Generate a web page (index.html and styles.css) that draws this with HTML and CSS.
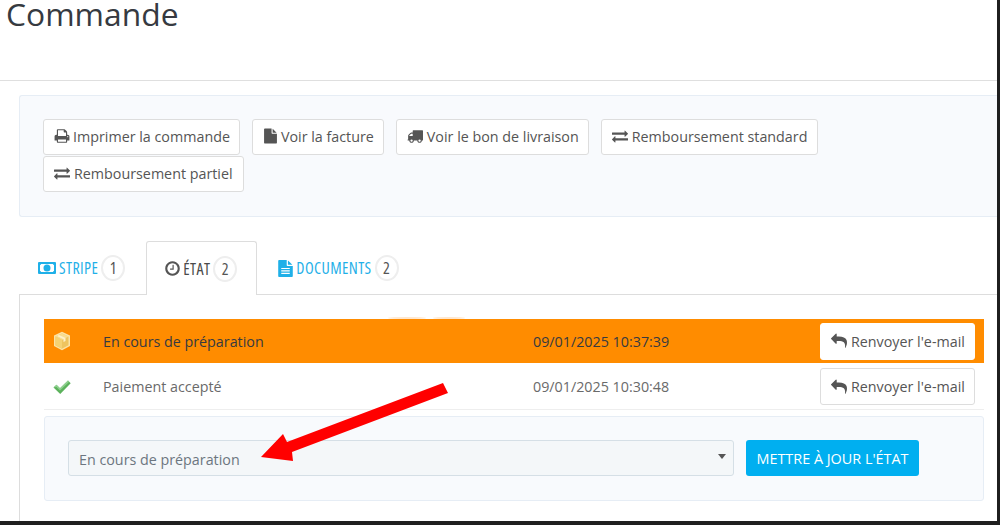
FILE: index.html
```html
<!DOCTYPE html>
<html lang="fr">
<head>
<meta charset="utf-8">
<title>Commande</title>
<link rel="stylesheet" href="styles.css">
</head>
<body>
<svg class="sprite" xmlns="http://www.w3.org/2000/svg">
  <symbol id="i-print" viewBox="0 0 1792 1792"><path d="M448 1536h896v-256h-896v256zm0-640h896v-384h-160q-40 0-68-28t-28-68v-160h-640v640zm1152 64q0-26-19-45t-45-19-45 19-19 45 19 45 45 19 45-19 19-45zm128 0v416q0 13-9.5 22.5t-22.5 9.5h-224v160q0 40-28 68t-68 28h-960q-40 0-68-28t-28-68v-160h-224q-13 0-22.5-9.5t-9.5-22.5v-416q0-79 56.5-135.5t135.5-56.5h64v-544q0-40 28-68t68-28h672q40 0 88 20t76 48l152 152q28 28 48 76t20 88v256h64q79 0 135.5 56.5t56.5 135.5z"/></symbol>
  <symbol id="i-file" viewBox="0 0 1792 1792"><path d="M1152 512v-472q22 14 36 28l408 408q14 14 28 36h-472zm-128 32q0 40 28 68t68 28h544v1056q0 40-28 68t-68 28h-1344q-40 0-68-28t-28-68v-1600q0-40 28-68t68-28h800v544z"/></symbol>
  <symbol id="i-truck" viewBox="0 0 1792 1792"><path d="M640 1408q0-52-38-90t-90-38-90 38-38 90 38 90 90 38 90-38 38-90zm-384-512h384v-256h-158q-13 0-22 9l-195 195q-9 9-9 22v30zm1280 512q0-52-38-90t-90-38-90 38-38 90 38 90 90 38 90-38 38-90zm256-1088v1024q0 15-4 26.5t-13.5 18.5-16.5 11.5-23.5 6-22.5 2-25.5 0-22.5-.5q0 106-75 181t-181 75-181-75-75-181h-384q0 106-75 181t-181 75-181-75-75-181h-64q-3 0-22.5.5t-25.5 0-22.5-2-23.5-6-16.5-11.5-13.5-18.5-4-26.5q0-26 19-45t45-19v-320q0-8-.5-35t0-38 2.5-34.5 6.5-37 14-30.5 22.5-30l198-198q19-19 50.5-32t58.5-13h160v-192q0-26 19-45t45-19h1024q26 0 45 19t19 45z"/></symbol>
  <symbol id="i-exchange" viewBox="0 0 1792 1792"><path d="M1792 1184v192q0 13-9.5 22.5t-22.5 9.5h-1376v192q0 13-9.5 22.5t-22.5 9.5q-12 0-24-10l-319-320q-9-9-9-22 0-14 9-23l320-320q9-9 23-9 13 0 22.5 9.5t9.5 22.5v192h1376q13 0 22.5 9.5t9.5 22.5zm0-544q0 14-9 23l-320 320q-9 9-23 9-13 0-22.5-9.5t-9.5-22.5v-192h-1376q-13 0-22.5-9.5t-9.5-22.5v-192q0-13 9.5-22.5t22.5-9.5h1376v-192q0-14 9-23t23-9q12 0 24 10l319 319q9 9 9 23z"/></symbol>
  <symbol id="i-clock" viewBox="0 0 1792 1792"><path d="M1024 544v448q0 14-9 23t-23 9h-320q-14 0-23-9t-9-23v-64q0-14 9-23t23-9h224v-352q0-14 9-23t23-9h64q14 0 23 9t9 23zm416 352q0-148-73-273t-198-198-273-73-273 73-198 198-73 273 73 273 198 198 273 73 273-73 198-198 73-273zm224 0q0 209-103 385.5t-279.5 279.5-385.5 103-385.5-103-279.5-279.5-103-385.5 103-385.5 279.5-279.5 385.5-103 385.5 103 279.5 279.5 103 385.5z"/></symbol>
  <symbol id="i-reply" viewBox="0 0 1792 1792"><path d="M1792 1120q0 166-127 451-3 7-10.5 24t-13.5 30-13 22q-12 17-28 17-15 0-23.5-10t-8.5-25q0-9 2.5-26.5t2.5-23.5q5-68 5-123 0-101-17.5-181t-48.5-138.5-80-101-105.5-69.5-133-42.5-154-21.5-175.5-6h-224v256q0 26-19 45t-45 19-45-19l-512-512q-19-19-19-45t19-45l512-512q19-19 45-19t45 19 19 45v256h224q713 0 875 403 53 134 53 333z"/></symbol>
  <symbol id="i-money" viewBox="0 0 18 12"><path fill-rule="evenodd" d="M1 0h16a1 1 0 0 1 1 1v10a1 1 0 0 1-1 1H1a1 1 0 0 1-1-1V1a1 1 0 0 1 1-1zm2 2a1 1 0 0 1-1 1v6a1 1 0 0 1 1 1h12a1 1 0 0 1 1-1V3a1 1 0 0 1-1-1H3zm6 .5a3.5 3.5 0 1 1 0 7 3.5 3.5 0 0 1 0-7z"/><path d="M8.2 4.2h1.3v3.2h1v.8H7.5v-.8h1v-2l-.6.4-.4-.6z" fill-rule="evenodd"/></symbol>
  <symbol id="i-doc" viewBox="0 0 1792 1792"><path fill-rule="evenodd" d="M1152 512v-472q22 14 36 28l408 408q14 14 28 36h-472zm-128 32q0 40 28 68t68 28h544v1056q0 40-28 68t-68 28h-1344q-40 0-68-28t-28-68v-1600q0-40 28-68t68-28h800v544zM448 832v128h896V832H448zm0 256v128h896v-128H448zm0 256v128h896v-128H448z"/></symbol>
</svg>

<div class="page">
  <header class="head">
    <h1 class="title">Commande</h1>
  </header>

  <main class="content">
    <section class="toolbar">
      <a class="btn btn-tight"><svg class="ico"><use href="#i-print"/></svg>Imprimer la commande</a>
      <a class="btn btn-tight"><svg class="ico ico-file"><use href="#i-file"/></svg>Voir la facture</a>
      <a class="btn btn-tight"><svg class="ico ico-roomy"><use href="#i-truck"/></svg>Voir le bon de livraison</a>
      <a class="btn"><svg class="ico ico-roomy"><use href="#i-exchange"/></svg>Remboursement standard</a>
      <a class="btn"><svg class="ico ico-roomy"><use href="#i-exchange"/></svg>Remboursement partiel</a>
    </section>

    <nav class="tabs">
      <a class="tab link first"><svg class="tab-ico wide"><use href="#i-money"/></svg><span class="tab-label">STRIPE</span><span class="badge">1</span></a>
      <a class="tab active"><svg class="tab-ico"><use href="#i-clock"/></svg><span class="tab-label">ÉTAT</span><span class="badge">2</span></a>
      <a class="tab link"><svg class="tab-ico"><use href="#i-doc"/></svg><span class="tab-label">DOCUMENTS</span><span class="badge">2</span></a>
    </nav>

    <section class="tab-body">
      <div class="history">
        <div class="row current">
          <i class="smudge smudge-a"></i><i class="smudge smudge-b"></i>
          <span class="state-ico">
            <svg width="20" height="20" viewBox="0 0 20 20"><path d="M10 .8l8 3.700v10.600l-8 4.100-8-4.100V4.500z" fill="#fbe3a6"/><path d="M10 2.500l6.500 3v8.800L10 17.800l-6.500-3.500V5.500z" fill="#eec45f"/><path d="M10 2.500l6.500 3L10 9 3.500 5.500z" fill="#f8dc8f"/><path d="M10 9v8.800l-6.500-3.500V5.500z" fill="#f5d273"/><path d="M7 3.900l6.500 3.200v3l-2 1V8.300L5.200 5z" fill="#fff0c8"/></svg>
          </span>
          <span class="state-name">En cours de préparation</span>
          <span class="state-date">09/01/2025 10:37:39</span>
          <a class="btn resend"><svg class="ico"><use href="#i-reply"/></svg>Renvoyer l'e-mail</a>
        </div>
        <div class="row">
          <span class="state-ico">
            <svg width="20" height="16" viewBox="0 0 20 16"><path d="M1.500 8.500l3-2.700 3.500 3.400L16 1.500l2.700 2.700L8.200 15z" fill="#5cb25c"/><path d="M1.500 8.500l3-2.700 3.500 3.400L16 1.500l1.200 1.200L8 11.500 4.500 8z" fill="#8fd08f"/></svg>
          </span>
          <span class="state-name">Paiement accepté</span>
          <span class="state-date">09/01/2025 10:30:48</span>
          <a class="btn resend"><svg class="ico"><use href="#i-reply"/></svg>Renvoyer l'e-mail</a>
        </div>
      </div>

      <form class="state-form">
        <div class="select"><span>En cours de préparation</span><i class="caret"></i></div>
        <button class="submit" type="button">METTRE À JOUR L'ÉTAT</button>
      </form>
    </section>
  </main>

  <svg class="arrow" width="200" height="90" viewBox="0 0 200 90" xmlns="http://www.w3.org/2000/svg">
    <polygon points="182,2 187,12 31,71 32,80 0,76 22,53 26,61" fill="#ff0000"/>
  </svg>
</div>
</body>
</html>
```
FILE: styles.css
```css
* { box-sizing: border-box; }
html, body { margin: 0; height: 100%; }
body {
  background: #1f1f1f;
  font-family: "Open Sans", "Noto Sans", sans-serif;
  font-size: 14.3px;
  color: #555;
  overflow: hidden;
}
.sprite { display: none; }

.page {
  position: relative;
  width: 997px;
  height: 521px;
  background: #fff;
  overflow: hidden;
}

.head {
  height: 81px;
  border-bottom: 1px solid #dfdfdf;
  padding-left: 6px;
}
.title {
  margin: 0;
  font-size: 31.8px;
  font-weight: 400;
  line-height: 28px;
  color: #363a41;
}

.content { padding: 14px 0 0 19px; }

.toolbar {
  display: flex;
  flex-wrap: wrap;
  gap: 1px 12px;
  height: 122px;
  padding: 23px 150px 0 23px;
  background: #f8fafd;
  border: 1px solid #e6edf5;
  border-right: 0;
  border-radius: 3px 0 0 3px;
  align-content: flex-start;
}

.btn {
  display: inline-flex;
  align-items: center;
  height: 36px;
  padding: 0 10px 2px;
  background: #fff;
  border: 1px solid #ddd;
  border-radius: 3px;
  color: #555;
  white-space: nowrap;
}
.btn-tight { padding-right: 9px; }
.ico {
  width: 16px;
  height: 16px;
  margin-right: 3px;
  fill: #555;
  flex: none;
}
.ico-file { width: 15px; }
.ico-roomy { margin-right: 4px; }

.tabs {
  display: flex;
  height: 54px;
  margin: 24px 0 0 -1px;
  position: relative;
  z-index: 1;
}
.tab {
  display: flex;
  align-items: center;
  height: 54px;
  padding: 0 20px;
  font-size: 16px;
  font-weight: 500;
  font-stretch: condensed;
  letter-spacing: 0.4px;
}
.tab.first { padding-right: 21px; }
.tab.link .tab-label { color: #1fb0e8; }
.tab.link .tab-ico { fill: #1fb0e8; }
.tab.active {
  background: #fff;
  border: 1px solid #ddd;
  border-bottom: 0;
  border-radius: 3px 3px 0 0;
  color: #4a4a4a;
  padding: 0 19px 0 17px;
}
.tab-ico {
  width: 17px;
  height: 17px;
  margin-right: 2px;
  fill: #555;
  flex: none;
}
.tab-ico.wide { width: 18px; height: 12px; margin-right: 3px; }
.tab-label { display: inline-block; }
.badge {
  display: flex;
  align-items: center;
  justify-content: center;
  width: 24px;
  height: 26px;
  margin-left: 3px;
  border: 2px solid #eee;
  border-radius: 50%;
  background: #fff;
  color: #555;
  font-weight: 400;
}

.tab-body {
  height: 227px;
  margin-top: -1px;
  padding: 24px 13px 0 24px;
  border-top: 1px solid #ddd;
  border-left: 1px solid #ddd;
}

.row {
  position: relative;
  display: grid;
  grid-template-columns: 59px 430px 1fr auto;
  align-items: center;
  height: 46px;
  padding-right: 9px;
  border-bottom: 1px solid #eee;
  color: #6a6a6a;
}
.row.current {
  height: 44px;
  margin-bottom: 1px;
  border-bottom: 0;
  background: #ff8c00;
  color: #363a41;
}
.row.current .btn { border-color: #fff; }
.smudge {
  position: absolute;
  top: -2px;
  height: 2px;
  border-radius: 50%;
  background: #ffe6cc;
}
.smudge-a { left: 344px; width: 38px; }
.smudge-b { left: 389px; width: 32px; }
.state-ico { display: flex; padding-left: 8px; }
.resend { height: 37px; padding: 0 10px; width: 155px; }
.resend .ico { margin-right: 4px; }

.state-form {
  display: flex;
  gap: 12px;
  height: 85px;
  margin-top: 6px;
  padding: 23px 0 0 23px;
  background: #f8fafd;
  border: 1px solid #e6edf5;
  border-radius: 3px;
}
.select {
  display: flex;
  align-items: center;
  justify-content: space-between;
  width: 666px;
  height: 36px;
  padding: 2px 10px 0;
  background: #f4f7f9;
  border: 1px solid #d5dfe6;
  border-radius: 3px;
  color: #6c7680;
}
.caret {
  border-left: 4.500px solid transparent;
  border-right: 4.500px solid transparent;
  border-top: 5px solid #555;
  margin-top: -6px;
  margin-right: -3px;
}
.submit {
  width: 173px;
  height: 36px;
  padding: 0;
  background: #00aff0;
  border: 0;
  border-radius: 3px;
  color: #fff;
  font: 400 14.4px "Open Sans", sans-serif;
}

.arrow {
  position: absolute;
  left: 261px;
  top: 381px;
}
```
